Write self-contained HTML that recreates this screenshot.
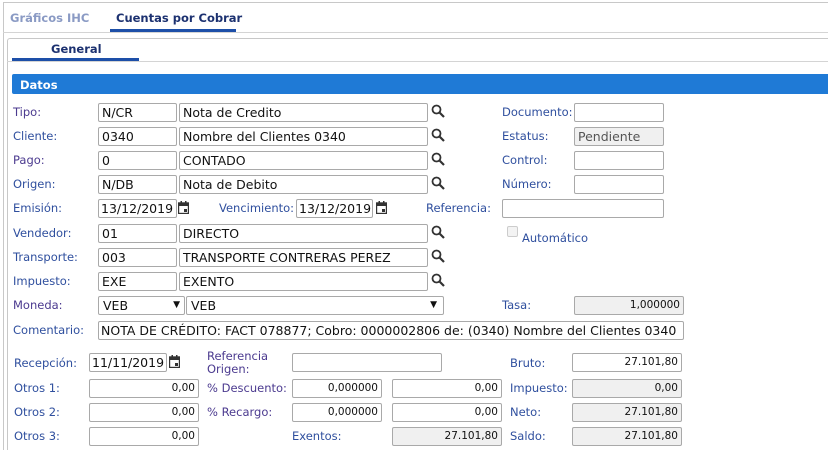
<!DOCTYPE html>
<html style="width:828px;height:450px;overflow:hidden"><head><meta charset="utf-8"><style>
*{box-sizing:border-box;margin:0;padding:0}
body{width:828px;height:450px;overflow:hidden;background:#fff;font-family:"DejaVu Sans",sans-serif;font-size:12px;position:relative}
.a{position:absolute}
.l{position:absolute;color:#2f4f9e;font-size:11.5px;line-height:14px;white-space:nowrap}
.p{color:#4b3a8f}
.i{position:absolute;height:19px;border:1px solid #a9a9a9;border-radius:2px;background:#fff;font-size:12.5px;line-height:17px;padding-left:3px;color:#111;white-space:nowrap;overflow:hidden}
.g{background:#f0f0f0}
.r{text-align:right;padding-right:3px;font-size:10.5px}
.s{position:absolute;width:14px;height:14px}
.c{position:absolute;width:11px;height:13px}
</style></head><body>
<div class="a" style="left:3px;top:2px;width:825px;height:448px;border:1px solid #c8c8c8;border-right:none;border-bottom:none"></div>
<div class="a" style="left:3px;top:32px;width:825px;border-top:1px solid #d4d4d4"></div>
<div class="a" style="left:10px;top:11px;font-weight:bold;color:#8a9ac4;font-size:11.5px">Gráficos IHC</div>
<div class="a" style="left:116px;top:11px;font-weight:bold;color:#1c3170;font-size:11.5px">Cuentas por Cobrar</div>
<div class="a" style="left:110px;top:29px;width:126px;height:3px;background:#1d4fa8"></div>
<div class="a" style="left:7px;top:38px;width:821px;height:412px;border:1px solid #c8c8c8;border-right:none;border-bottom:none;border-radius:3px 0 0 0"></div>
<div class="a" style="left:7px;top:61px;width:821px;border-top:1px solid #d4d4d4"></div>
<div class="a" style="left:51px;top:42px;font-weight:bold;color:#1c3170;font-size:11.5px">General</div>
<div class="a" style="left:12px;top:58px;width:127px;height:3px;background:#1d4fa8"></div>
<div class="a" style="left:12px;top:74px;width:816px;height:20px;background:#1f7ad6;border-radius:2px 0 0 2px;color:#fff;font-weight:bold;font-size:11.5px;padding:4px 0 0 8px">Datos</div>

<svg width="0" height="0" style="position:absolute"><defs>
<g id="mg"><circle cx="5.5" cy="5.5" r="4" fill="none" stroke="#333" stroke-width="1.8"/><path d="M8.5 8.5L13 13" stroke="#333" stroke-width="2.2"/></g>
<g id="cal"><rect x="0.5" y="2" width="10" height="10.5" fill="none" stroke="#333" stroke-width="1.4"/><rect x="0.5" y="2" width="10" height="3" fill="#333"/><rect x="2.5" y="0" width="1.5" height="2.5" fill="#333"/><rect x="7" y="0" width="1.5" height="2.5" fill="#333"/><rect x="6" y="8" width="3" height="3" fill="#333"/></g>
</defs></svg>

<div class="l p" style="left:13px;top:105px">Tipo:</div>
<div class="i" style="left:98px;top:103px;width:79px">N/CR</div>
<div class="i" style="left:179px;top:103px;width:249px">Nota de Credito</div>
<svg class="s" style="left:431px;top:104px"><use href="#mg"/></svg>
<div class="l" style="left:502px;top:105px">Documento:</div>
<div class="i" style="left:574px;top:103px;width:90px"></div>

<div class="l" style="left:13px;top:129px">Cliente:</div>
<div class="i" style="left:98px;top:127px;width:79px">0340</div>
<div class="i" style="left:179px;top:127px;width:249px">Nombre del Clientes 0340</div>
<svg class="s" style="left:431px;top:128px"><use href="#mg"/></svg>
<div class="l" style="left:502px;top:129px">Estatus:</div>
<div class="i g" style="left:574px;top:127px;width:90px;color:#555">Pendiente</div>

<div class="l p" style="left:13px;top:153px">Pago:</div>
<div class="i" style="left:98px;top:151px;width:79px">0</div>
<div class="i" style="left:179px;top:151px;width:249px">CONTADO</div>
<svg class="s" style="left:431px;top:152px"><use href="#mg"/></svg>
<div class="l" style="left:502px;top:153px">Control:</div>
<div class="i" style="left:574px;top:151px;width:90px"></div>

<div class="l" style="left:13px;top:177px">Origen:</div>
<div class="i" style="left:98px;top:175px;width:79px">N/DB</div>
<div class="i" style="left:179px;top:175px;width:249px">Nota de Debito</div>
<svg class="s" style="left:431px;top:176px"><use href="#mg"/></svg>
<div class="l" style="left:502px;top:177px">Número:</div>
<div class="i" style="left:574px;top:175px;width:90px"></div>

<div class="l" style="left:13px;top:201px">Emisión:</div>
<div class="i" style="left:98px;top:199px;width:79px;padding-left:2px">13/12/2019</div>
<svg class="c" style="left:178px;top:201px"><use href="#cal"/></svg>
<div class="l" style="left:219px;top:201px">Vencimiento:</div>
<div class="i" style="left:296px;top:199px;width:77px;padding-left:2px">13/12/2019</div>
<svg class="c" style="left:376px;top:201px"><use href="#cal"/></svg>
<div class="l" style="left:426px;top:201px">Referencia:</div>
<div class="i" style="left:502px;top:199px;width:162px"></div>

<div class="l" style="left:13px;top:226px">Vendedor:</div>
<div class="i" style="left:98px;top:224px;width:79px">01</div>
<div class="i" style="left:179px;top:224px;width:249px">DIRECTO</div>
<svg class="s" style="left:431px;top:225px"><use href="#mg"/></svg>
<div class="a" style="left:507px;top:226px;width:11px;height:11px;border:1px solid #ccc;border-radius:2px;background:#f3f3f3"></div>
<div class="l" style="left:522px;top:231px">Automático</div>

<div class="l" style="left:13px;top:250px">Transporte:</div>
<div class="i" style="left:98px;top:248px;width:79px">003</div>
<div class="i" style="left:179px;top:248px;width:249px">TRANSPORTE CONTRERAS PEREZ</div>
<svg class="s" style="left:431px;top:249px"><use href="#mg"/></svg>

<div class="l" style="left:13px;top:274px">Impuesto:</div>
<div class="i" style="left:98px;top:272px;width:79px">EXE</div>
<div class="i" style="left:179px;top:272px;width:249px">EXENTO</div>
<svg class="s" style="left:431px;top:273px"><use href="#mg"/></svg>

<div class="l p" style="left:13px;top:298px">Moneda:</div>
<div class="i" style="left:98px;top:296px;width:87px;padding-left:4px">VEB<span style="position:absolute;right:4px;font-size:9px">▼</span></div>
<div class="i" style="left:186px;top:296px;width:258px;padding-left:4px">VEB<span style="position:absolute;right:6px;font-size:9px">▼</span></div>
<div class="l" style="left:502px;top:298px">Tasa:</div>
<div class="i g r" style="left:574px;top:296px;width:110px">1,000000</div>

<div class="l" style="left:13px;top:323px">Comentario:</div>
<div class="i" style="left:98px;top:321px;width:586px;padding-left:2px">NOTA DE CRÉDITO: FACT 078877; Cobro: 0000002806 de: (0340) Nombre del Clientes 0340</div>

<div class="l" style="left:14px;top:356px">Recepción:</div>
<div class="i" style="left:89px;top:353px;width:78px;padding-left:2px">11/11/2019</div>
<svg class="c" style="left:169px;top:355px"><use href="#cal"/></svg>
<div class="l p" style="left:207px;top:350px;line-height:13px">Referencia<br>Origen:</div>
<div class="i" style="left:292px;top:353px;width:150px"></div>
<div class="l" style="left:510px;top:356px">Bruto:</div>
<div class="i r" style="left:572px;top:353px;width:110px">27.101,80</div>

<div class="l" style="left:14px;top:381px">Otros 1:</div>
<div class="i r" style="left:89px;top:379px;width:110px">0,00</div>
<div class="l p" style="left:207px;top:381px">% Descuento:</div>
<div class="i r" style="left:292px;top:379px;width:90px">0,000000</div>
<div class="i r" style="left:392px;top:379px;width:110px">0,00</div>
<div class="l" style="left:510px;top:381px">Impuesto:</div>
<div class="i g r" style="left:572px;top:379px;width:110px">0,00</div>

<div class="l" style="left:14px;top:405px">Otros 2:</div>
<div class="i r" style="left:89px;top:403px;width:110px">0,00</div>
<div class="l p" style="left:207px;top:405px">% Recargo:</div>
<div class="i r" style="left:292px;top:403px;width:90px">0,000000</div>
<div class="i r" style="left:392px;top:403px;width:110px">0,00</div>
<div class="l" style="left:510px;top:405px">Neto:</div>
<div class="i g r" style="left:572px;top:403px;width:110px">27.101,80</div>

<div class="l" style="left:14px;top:429px">Otros 3:</div>
<div class="i r" style="left:89px;top:427px;width:110px">0,00</div>
<div class="l" style="left:292px;top:429px">Exentos:</div>
<div class="i g r" style="left:392px;top:427px;width:110px">27.101,80</div>
<div class="l" style="left:510px;top:429px">Saldo:</div>
<div class="i g r" style="left:572px;top:427px;width:110px">27.101,80</div>
</body></html>
